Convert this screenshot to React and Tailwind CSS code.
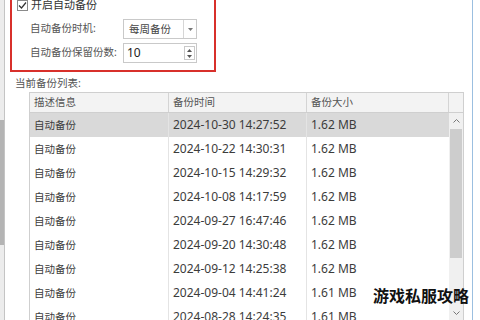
const rows = [
  ["自动备份", "2024-10-30 14:27:52", "1.62 MB"],
  ["自动备份", "2024-10-22 14:30:31", "1.62 MB"],
  ["自动备份", "2024-10-15 14:29:32", "1.62 MB"],
  ["自动备份", "2024-10-08 14:17:59", "1.62 MB"],
  ["自动备份", "2024-09-27 16:47:46", "1.62 MB"],
  ["自动备份", "2024-09-20 14:30:48", "1.62 MB"],
  ["自动备份", "2024-09-12 14:25:38", "1.62 MB"],
  ["自动备份", "2024-09-04 14:41:24", "1.61 MB"],
  ["自动备份", "2024-08-28 14:24:35", "1.61 MB"],
];

const font = { fontFamily: '"Segoe UI", "Noto Sans", "Noto Sans CJK SC", sans-serif' };

export default function App() {
  return (
    <div
      className="w-[480px] h-[320px] overflow-hidden bg-white flex text-[12px] text-[#3c3c3c] relative"
      style={font}
    >
      {/* left window edge */}
      <div className="w-[4px] flex flex-col bg-[#ececec]">
        <div className="h-[120px]" />
        <div className="h-[125px] bg-[#b4b4b4]" />
      </div>
      <div className="w-px bg-[#c4c4c4]" />

      {/* window content */}
      <div className="w-[467px] flex flex-col">
        {/* options group */}
        <div className="ml-[5px] mt-[-13px] w-[206px] h-[85px] shrink-0 border-2 border-[#d8302b] flex flex-col pl-[5px]">
          <div className="h-[20px] mt-[6px] flex items-center gap-[3px]">
            <div className="w-[11px] h-[11px] border border-[#8a8a8a] bg-white flex items-center justify-center">
              <svg width="9" height="9" viewBox="0 0 9 9">
                <path d="M1 4.5 L3.5 7 L8 1.5" fill="none" stroke="#333" strokeWidth="1.2" />
              </svg>
            </div>
            <span className="text-[11px] text-[#333]">开启自动备份</span>
          </div>
          <div className="h-[24px] mt-[2px] flex items-center">
            <div className="w-[106px] shrink-0 pl-[13px] text-[10.5px] text-[#555] whitespace-nowrap">自动备份时机:</div>
            <div className="w-[74px] h-[20px] border border-[#c9c9c9] flex">
              <span className="flex-1 pl-[5px] leading-[18px] text-[10.5px] text-[#444]">每周备份</span>
              <div className="w-[13px] border-l border-[#d6d6d6] flex items-center justify-center">
                <svg width="5" height="3" viewBox="0 0 5 3">
                  <path d="M0 0 L5 0 L2.5 3 Z" fill="#777" />
                </svg>
              </div>
            </div>
          </div>
          <div className="h-[24px] flex items-center">
            <div className="w-[106px] shrink-0 pl-[13px] text-[10.5px] text-[#555] whitespace-nowrap">自动备份保留份数:</div>
            <div className="w-[74px] h-[20px] border border-[#c9c9c9] flex">
              <span className="flex-1 pl-[3px] leading-[18px] text-[#222]">10</span>
              <div className="w-[11px] my-[2px] mr-[1px] border border-[#c9c9c9] flex flex-col items-center justify-around">
                <svg width="5" height="3" viewBox="0 0 5 3">
                  <path d="M0 3 L5 3 L2.5 0 Z" fill="#555" />
                </svg>
                <svg width="5" height="3" viewBox="0 0 5 3">
                  <path d="M0 0 L5 0 L2.5 3 Z" fill="#555" />
                </svg>
              </div>
            </div>
          </div>
        </div>

        <div className="ml-[10px] mt-[3px] h-[16px] leading-[16px] text-[10.5px] text-[#555]">当前备份列表:</div>

        {/* table */}
        <div className="ml-[24px] mt-px w-[435px] border border-[#cfcfcf] flex flex-col">
          <div className="h-[20px] flex bg-[#f3f3f3] border-b border-[#cfcfcf]">
            <div className="w-[139px] pl-[4px] leading-[19px] text-[10.5px] border-r border-[#d4d4d4] text-[#555]">描述信息</div>
            <div className="w-[138px] pl-[4px] leading-[19px] text-[10.5px] border-r border-[#d4d4d4] text-[#555]">备份时间</div>
            <div className="w-[142px] pl-[4px] leading-[19px] text-[10.5px] border-r border-[#d4d4d4] text-[#555]">备份大小</div>
            <div className="flex-1" />
          </div>
          <div className="flex">
            <div className="w-[419px] flex flex-col">
              {rows.map((r, i) => (
                <div
                  key={i}
                  className={`h-[24px] flex ${i === 0 ? "bg-[#d9d9d9]" : "bg-white"}`}
                >
                  <div className="w-[139px] pl-[4px] leading-[24px] text-[10.5px] border-r border-[#e4e4e4]">{r[0]}</div>
                  <div className="w-[138px] pl-[4px] leading-[24px] border-r border-[#e4e4e4]">{r[1]}</div>
                  <div className="w-[142px] pl-[4px] leading-[24px]">{r[2]}</div>
                </div>
              ))}
            </div>
            {/* scrollbar */}
            <div className="flex-1 bg-[#f0f0f0] flex flex-col">
              <div className="h-[16px] flex items-center justify-center">
                <svg width="7" height="4" viewBox="0 0 7 4">
                  <path d="M0.5 3.5 L3.5 0.5 L6.5 3.5" fill="none" stroke="#777" strokeWidth="1" />
                </svg>
              </div>
              <div className="h-[129px] mx-[1px] bg-[#cdcdcd]" />
              <div className="flex-1" />
              <div className="h-[22px] flex items-start justify-center pt-[4px]">
                <svg width="7" height="4" viewBox="0 0 7 4">
                  <path d="M0.5 0.5 L3.5 3.5 L6.5 0.5" fill="none" stroke="#777" strokeWidth="1" />
                </svg>
              </div>
            </div>
          </div>
        </div>
      </div>

      {/* right window edge */}
      <div className="w-px bg-[#9bbfe0]" />
      <div className="flex-1 bg-white" />

      {/* watermark */}
      <div
        className="absolute left-[373px] top-[285px] text-[16px] font-bold text-[#111] leading-[20px]"
        style={{ fontFamily: '"Noto Sans CJK SC", sans-serif' }}
      >
        游戏私服攻略
      </div>
    </div>
  );
}
